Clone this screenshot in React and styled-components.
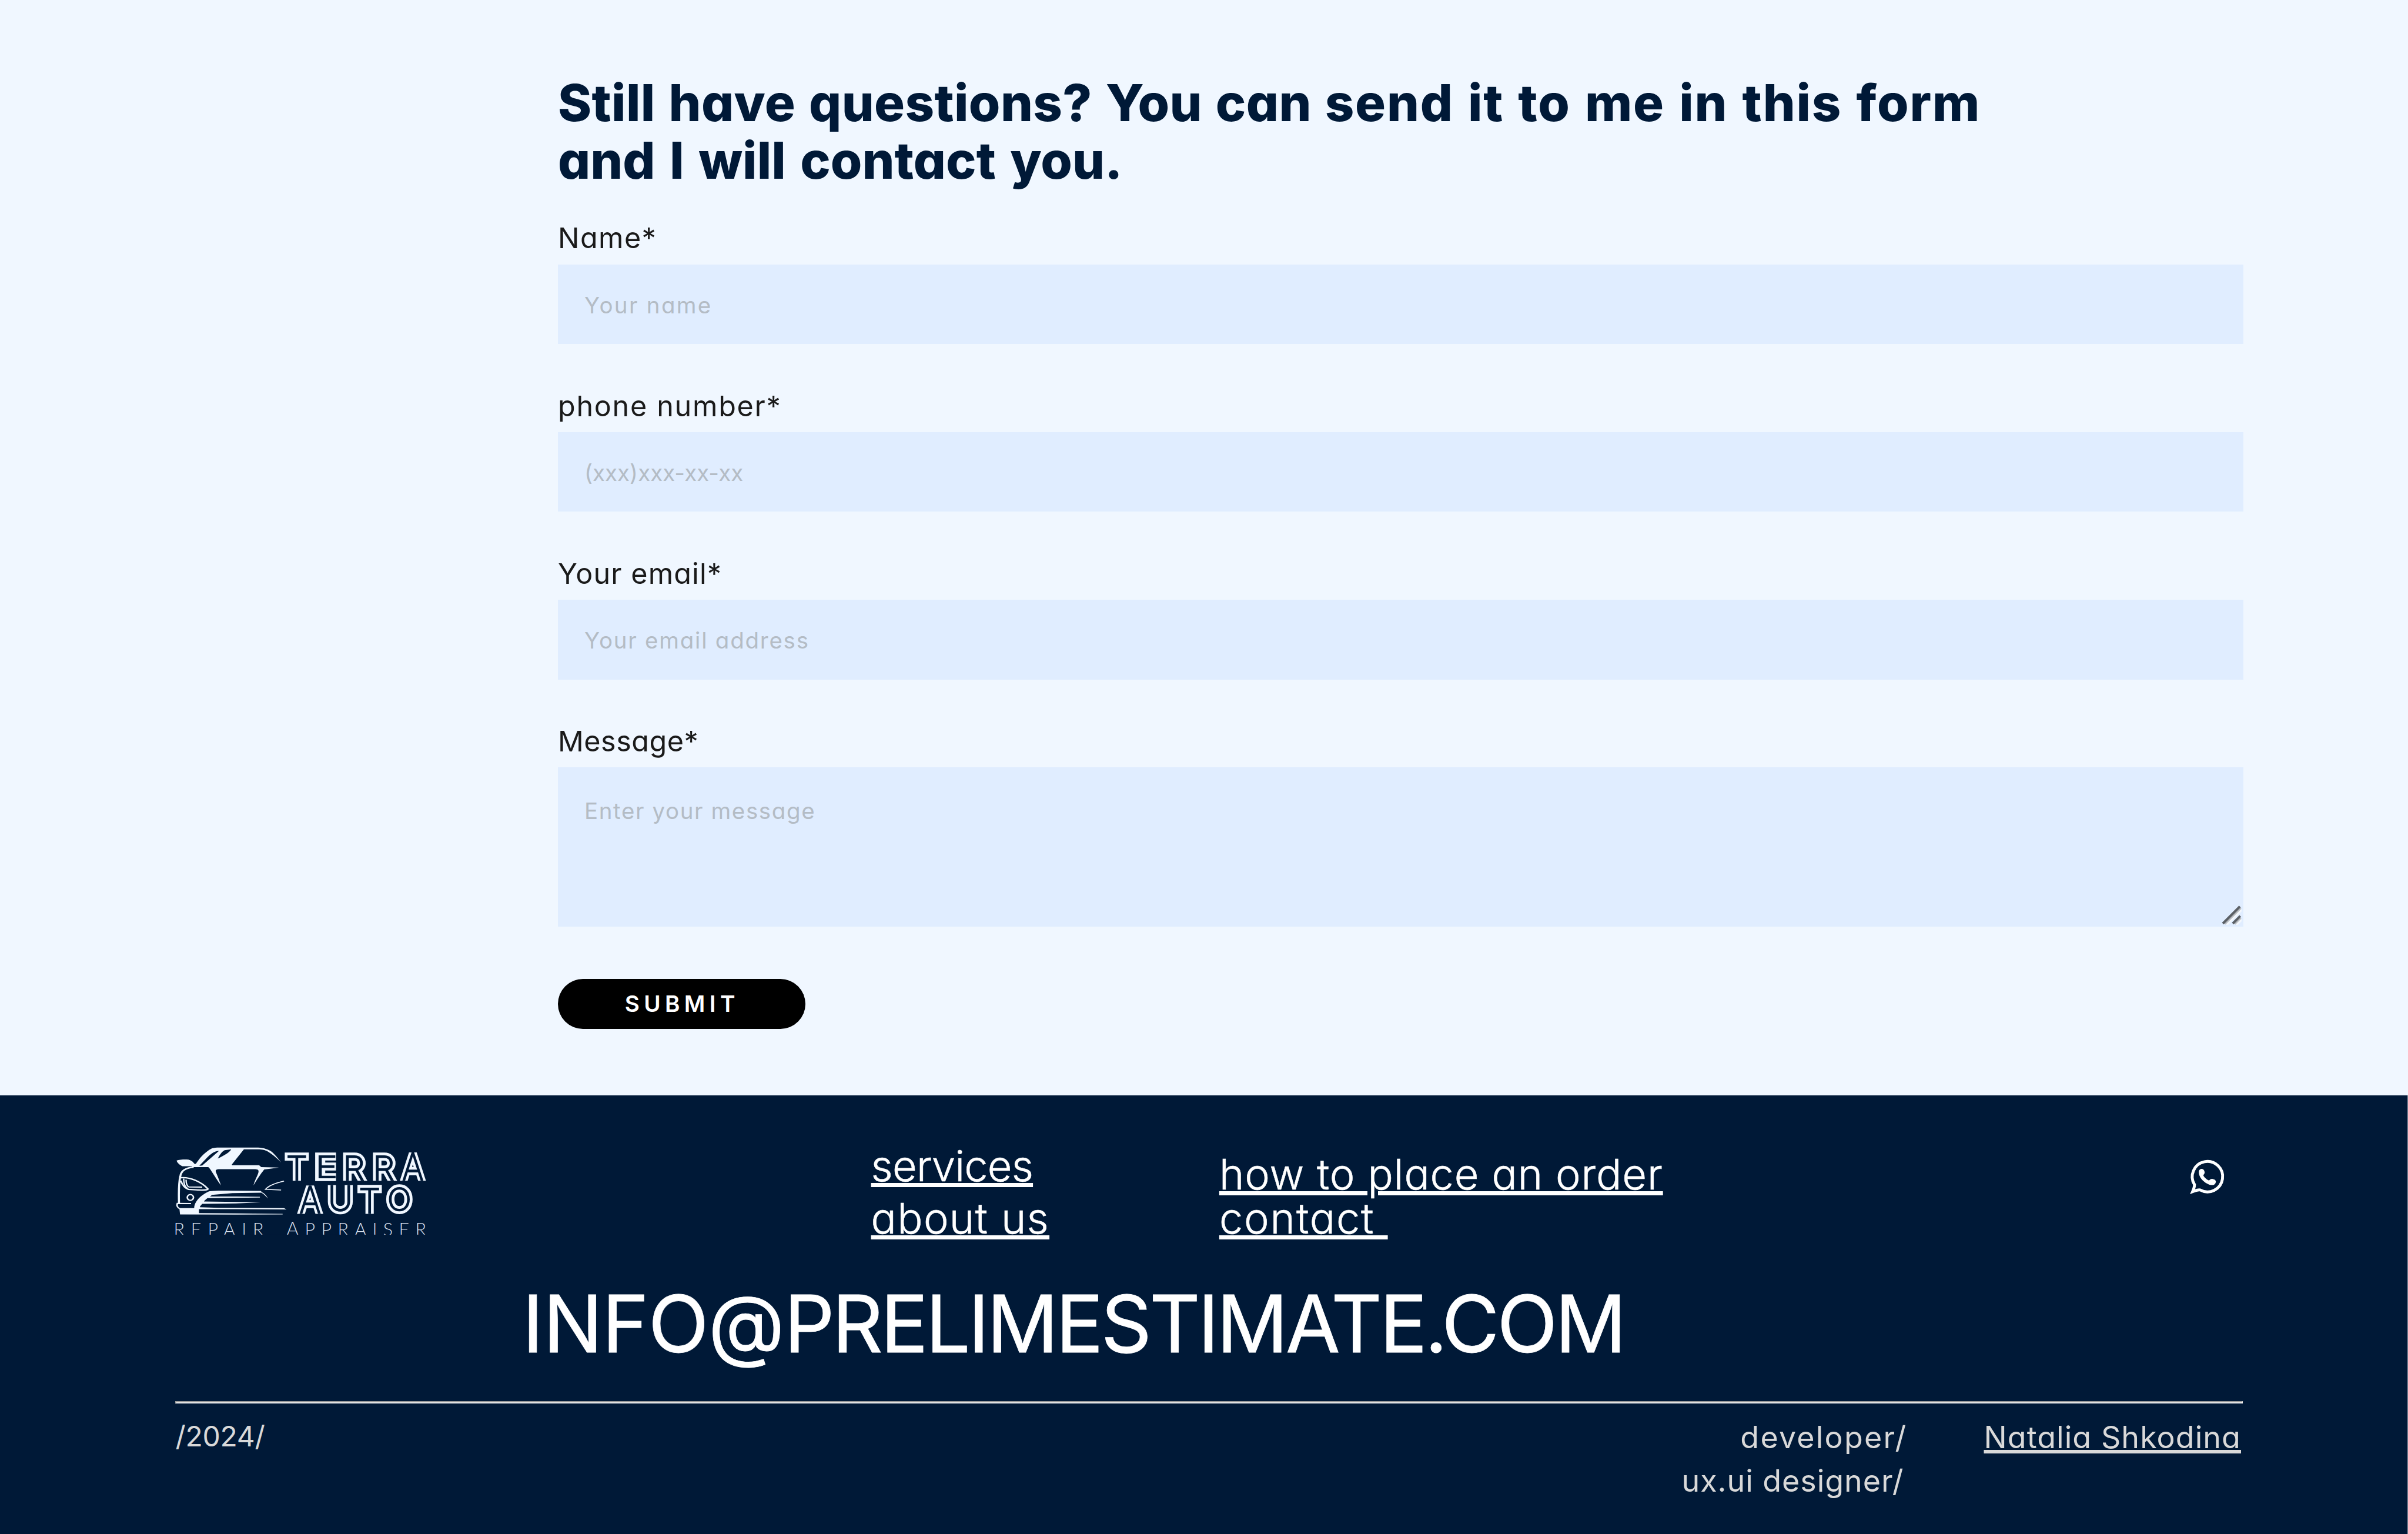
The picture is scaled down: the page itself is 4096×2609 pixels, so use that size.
import React from 'react'
import styled, { createGlobalStyle } from 'styled-components';

const GlobalStyle = createGlobalStyle`
    * {
        box-sizing: border-box;
    }
    body {
        margin: 0;
        background-color: #f0f7ff;
        font-family: Inter, "Open Sans", sans-serif;
        font-feature-settings: "cv11";
    }
`;

const Page = styled.div`
    display: flex;
    flex-direction: column;
    width: 4096px;
    height: 2609px;
    overflow: hidden;
`;

const ContactSection = styled.section`
    flex: none;
    height: 1863px;
    padding: 125.6px 279.7px 0 949px;
`;

const Title = styled.h2`
    margin: 0 0 52.7px;
    color: #001937;
    font-size: 86.7px;
    font-weight: 800;
    line-height: 98.6px;
    white-space: nowrap;
`;

const Form = styled.form`
    display: flex;
    flex-direction: column;
    gap: 75.7px;
`;

const Text = styled.span`
    letter-spacing: ${({ $spacing }) => $spacing || 0}px;
    word-spacing: ${({ $words }) => $words || 0}px;
`;

const Field = styled.label`
    display: flex;
    flex-direction: column;
    gap: 14.8px;
    position: relative;
    color: #1a1a1a;
    font-size: 48.5px;
    font-weight: 400;
    line-height: 59.3px;
`;

const Input = styled.input`
    width: 100%;
    height: 135.5px;
    padding: 2.6px 45px 0;
    border: none;
    border-radius: 0;
    outline: none;
    background-color: #e0edff;
    font: 400 38.5px Inter, sans-serif;
    font-feature-settings: "cv11";
    letter-spacing: ${({ $spacing }) => $spacing}px;
    &::placeholder {
        color: #b4bcc5;
    }
`;

const Textarea = styled(Input)`
    display: block;
    height: 270.5px;
    padding: 48.5px 45px 0;
    line-height: 50px;
    resize: none;
`;

const ResizeGrip = styled.svg`
    position: absolute;
    right: 3px;
    bottom: 3px;
    width: 34px;
    height: 34px;
`;

const SubmitButton = styled.button`
    align-self: flex-start;
    width: 420.5px;
    height: 85px;
    margin-top: 13.3px;
    padding: 0 0 0 2px;
    border: none;
    border-radius: 42.5px;
    background-color: #000000;
    color: #ffffff;
    font: 600 38.6px Inter, sans-serif;
    letter-spacing: 7.4px;
`;

const Footer = styled.footer`
    flex: 1;
    padding: 70px 281px 0 297.6px;
    border-right: 1px solid #8f99a9;
    background-color: #001937;
    color: #ffffff;
`;

const FooterTop = styled.div`
    display: grid;
    grid-template-columns: 1184px 592.3px 1652.1px auto;
    align-items: start;
    height: 180px;
`;

const Logo = styled.svg`
    width: 428px;
    height: 152.6px;
    margin-top: 18px;
`;

const LinkColumn = styled.nav`
    display: flex;
    flex-direction: column;
    align-items: flex-start;
    margin-top: ${({ $top }) => $top};
    font-size: 72px;
    font-weight: 300;
    line-height: ${({ $line }) => $line};
    -webkit-text-stroke: 0.6px #ffffff;
`;

const FooterLink = styled.a`
    color: inherit;
    letter-spacing: ${({ $spacing }) => $spacing || 0}px;
    text-decoration: underline;
    text-decoration-thickness: 7px;
    text-underline-offset: 3.2px;
    white-space: pre;
`;

const WhatsappIcon = styled.svg`
    width: 57px;
    height: 58px;
    margin-top: 39.4px;
    overflow: visible;
`;

const Email = styled.p`
    margin: 57.6px 0 52.2px 591px;
    font-size: 134.4px;
    font-weight: 400;
    line-height: 160px;
    white-space: nowrap;
    -webkit-text-stroke: 0.8px #ffffff;
`;

const Divider = styled.hr`
    height: 4px;
    margin: 0 -1px 0 0;
    border: 2px solid;
    border-color: #9a9a9a #eeeeee #eeeeee #9a9a9a;
`;

const FooterBottom = styled.div`
    display: flex;
    align-items: flex-start;
    padding: 20.5px 2px 0 1px;
    color: #d9d9d9;
    font-size: 52px;
    font-weight: 400;
    line-height: 73.5px;
`;

const Year = styled.span`
    margin-right: auto;
    font-size: 48px;
    line-height: 72px;
    letter-spacing: ${({ $spacing }) => $spacing}px;
`;

const Roles = styled.div`
    display: flex;
    flex-direction: column;
    align-items: flex-end;
    margin: 1px 130px 0 0;
`;

const Role = styled.span`
    margin-right: ${({ $right }) => $right || 0}px;
    letter-spacing: ${({ $spacing }) => $spacing || 0}px;
`;

const Author = styled(FooterLink)`
    margin-top: 1px;
    text-decoration-thickness: 5.5px;
`;

const fields = [
  { label: 'Name*', placeholder: 'Your name', labelSpacing: 1.4, spacing: 2.3 },
  { label: 'phone number*', placeholder: '(xxx)xxx-xx-xx', labelSpacing: 1.7, spacing: 0 },
  { label: 'Your email*', placeholder: 'Your email address', labelSpacing: 1.1, spacing: 1.75 },
];

const letters = [
  { char: 'T', x: 220.8, y: 77.2, size: 58, clip: 'foot' },
  { char: 'E', x: 271.3, y: 71.7, size: 51, stretch: 1.25, clip: 'side' },
  { char: 'R', x: 318, y: 77.2, size: 58, stretch: 1.03, clip: 'foot' },
  { char: 'R', x: 368.6, y: 77.2, size: 58, stretch: 1.03, clip: 'foot' },
  { char: 'A', x: 418.3, y: 77.2, size: 65, stretch: 0.87, clip: 'apex' },
  { char: 'A', x: 243.5, y: 133.5, size: 65, stretch: 0.87, clip: 'apex' },
  { char: 'U', x: 295, y: 127.6, size: 60, stretch: 0.97, clip: 'head' },
  { char: 'T', x: 344.8, y: 133.5, size: 59, clip: 'foot' },
  { char: 'O', x: 395.3, y: 128.4, size: 53, stretch: 1.02 },
];

// the open ends of the inline letters are cut by these boxes
const clips = {
  foot: { x: -35, y: -60, width: 70, height: 60 },
  apex: { x: -35, y: -48.2, width: 70, height: 48.2 },
  head: { x: -35, y: -43.2, width: 70, height: 60 },
  side: { x: -30, y: -50, width: 43, height: 80 },
};

const InlineLetter = ({ id, char, x, y, size, stretch = 1, clip }) => (
  <g transform={`translate(${x} ${y}) scale(${stretch} 1)`} clipPath={clip && `url(#clip-${clip})`}>
    <defs>
      <text id={id} textAnchor="middle" fontFamily="Inter" fontWeight="200" fontSize={size}>{char}</text>
    </defs>
    <use href={`#${id}`} fill="#f0f7ff" stroke="#f0f7ff" strokeWidth="11.3" />
    <use href={`#${id}`} fill="#001937" stroke="#001937" strokeWidth="2" />
  </g>
)

const TerraAutoLogo = () => (
  <Logo viewBox="14 20 428 152.6">
    <defs>
      {Object.entries(clips).map(([name, box]) => (
        <clipPath id={`clip-${name}`} key={name}><rect {...box} /></clipPath>
      ))}
    </defs>
    <g transform="scale(.2928 .2251)" fill="#f0f7ff">
      <path d="M56 190C70 182 110 180 125 183C145 190 155 205 160 216L168 216C180 190 215 128 262 98C275 93 290 92 300 92L530 92C560 94 590 105 610 125C635 155 655 190 664 205C640 175 610 140 580 118C560 106 545 105 520 105L447 105L377 220L378 226L535 226L548 240L650 243L600 252L565 258C545 290 520 340 503 378C508 340 535 290 532 268C530 258 520 256 500 256L300 256C280 258 282 268 285 280C295 310 305 345 314 378C290 340 265 280 245 246L240 240L150 240L145 233L90 233C75 225 60 210 56 190Z" />
      <path d="M188 230L205 228L302 118C280 115 255 140 235 165ZM295 176C305 150 320 120 335 112L373 105C370 120 345 142 295 176Z" fill="#001937" />
      <path d="M72 550L158 550C158 510 185 460 240 425C260 418 300 418 350 418L545 420L552 430C570 440 580 460 587 478C575 460 560 440 548 433L380 436L280 448L262 450L250 462L400 462L540 464L540 470L235 474C225 485 215 495 215 500L400 503L545 507L400 514L205 518C195 530 190 540 192 543L300 548L680 550L695 560L400 558L186 558L186 588L420 590L672 593L672 598L400 599L76 597Z" />
      <g fill="none" stroke="#f0f7ff">
        <path d="M155 240C105 246 83 268 78 305C68 360 68 440 70 515" strokeWidth="12" />
        <path d="M140 515L60 514C56 530 60 548 78 556" strokeWidth="9" />
        <path d="M80 320C130 312 200 350 238 405C235 415 215 414 180 413L125 408C100 398 88 370 80 342" strokeWidth="10" />
        <path d="M97 326C97 365 105 390 120 402M111 335C111 360 117 383 128 390L205 391" strokeWidth="8" />
        <ellipse cx="136" cy="469" rx="18" ry="22" strokeWidth="9" />
        <path d="M680 345C630 360 590 380 572 408L663 413" strokeWidth="7" />
      </g>
    </g>
    {letters.map((letter, i) => <InlineLetter key={i} id={`letter-${i}`} {...letter} />)}
    <g fill="#d5deea" fontFamily="Lato" fontWeight="300" fontSize="30.5">
      <text x="11.5" y="170.6" textLength="153" lengthAdjust="spacing">REPAIR</text>
      <text x="203" y="170.6" textLength="238" lengthAdjust="spacing"><tspan fontSize="32.5">A</tspan>PPRAISER</text>
    </g>
    <rect x="10" y="168.9" width="436" height="6" fill="#001937" />
  </Logo>
)

const App = () => {
  return (
    <Page>
        <GlobalStyle />
        <ContactSection>
            <Title>
                <Text $spacing={0.35} $words={3.5}>Still have questions? You can </Text>
                <Text $spacing={1.75} $words={3.5}>send it to me in this form</Text>
                <br />
                <Text $words={5.5}>and I will contact you.</Text>
            </Title>
            <Form>
                {fields.map(field => (
                    <Field key={field.label}>
                        <Text $spacing={field.labelSpacing}>{field.label}</Text>
                        <Input placeholder={field.placeholder} $spacing={field.spacing} />
                    </Field>
                ))}
                <Field>
                    <Text $spacing={0.5}>Message*</Text>
                    <Textarea as="textarea" placeholder="Enter your message" $spacing={1.6} />
                    <ResizeGrip viewBox="0 0 151 151">
                        <path d="M38 151L151 38M112 151L151 112" stroke="#f3f7fc" strokeWidth="16" />
                        <path d="M25 145L145 25M100 145L145 100" stroke="#b9bcc0" strokeWidth="12" />
                        <path d="M9 141L138 12M84 141L141 84" stroke="#5b6066" strokeWidth="18" />
                    </ResizeGrip>
                </Field>
                <SubmitButton type="button">SUBMIT</SubmitButton>
            </Form>
        </ContactSection>
        <Footer>
            <FooterTop>
                <TerraAutoLogo />
                <LinkColumn $top="5px" $line="89px">
                    <FooterLink $spacing={-0.8}>services</FooterLink>
                    <FooterLink $spacing={1.3}>about us</FooterLink>
                </LinkColumn>
                <LinkColumn $top="26px" $line="75px">
                    <FooterLink $spacing={0.87}>how to place an order</FooterLink>
                    <FooterLink $spacing={1.9}>{'contact '}</FooterLink>
                </LinkColumn>
                <WhatsappIcon viewBox="206 184 253 258">
                    <path d="M236 374A115 115 0 1 1 279 415Q262 412 222 427Q236 395 236 374Z" fill="none" stroke="#ffffff" strokeWidth="22" />
                    <path d="M291 255C303 255 313 268 313 283C313 292 304 298 303 305C310 320 328 335 345 343C352 340 358 330 370 331C385 334 398 340 398 352C396 368 385 378 372 378C330 378 268 330 269 278C269 265 278 255 291 255Z" fill="#ffffff" />
                </WhatsappIcon>
            </FooterTop>
            <Email>
                <Text $spacing={-0.8}>INFO@</Text>
                <Text $spacing={-4.05}>PRELIMESTIMATE.COM</Text>
            </Email>
            <Divider />
            <FooterBottom>
                <Year $spacing={-0.3}>/2024/</Year>
                <Roles>
                    <Role $spacing={2.2}>developer/</Role>
                    <Role $spacing={0.95} $right={6}>ux.ui designer/</Role>
                </Roles>
                <Author $spacing={1.05}>Natalia Shkodina</Author>
            </FooterBottom>
        </Footer>
    </Page>
  )
}

export default App
